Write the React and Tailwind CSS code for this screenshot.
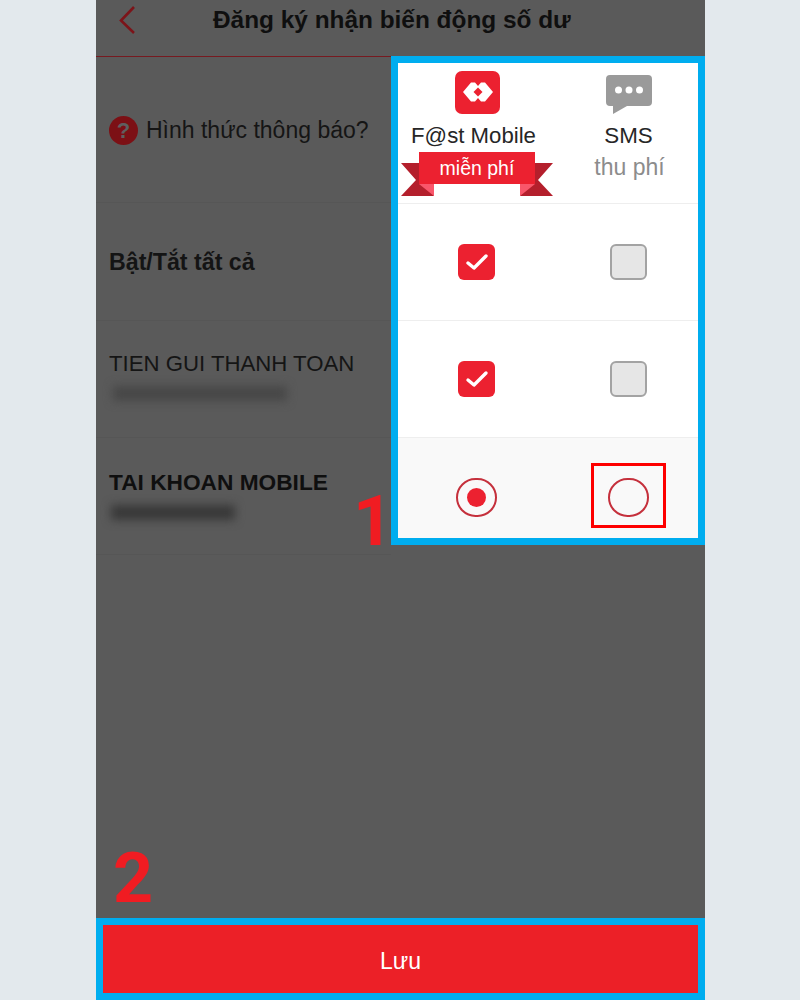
import React from 'react'

const Ribbon = () => (
    <div className="relative w-[152px] h-[47px] mt-[1px]">
        <svg width="152" height="47" viewBox="0 0 152 47" className="block">
            <polygon points="0,13 18,13 33,46 0,46 15,30" fill="#b41f2c" />
            <polygon points="152,13 134,13 119,46 152,46 137,30" fill="#b41f2c" />
            <polygon points="18,34 33,34 33,46" fill="#f9566a" />
            <polygon points="134,34 119,34 119,46" fill="#f9566a" />
            <rect x="18" y="2" width="116" height="32" fill="#ec2130" />
        </svg>
        <span className="absolute left-0 right-0 top-[6px] text-center text-[19.5px] leading-[24px] text-white">miễn phí</span>
    </div>
)

const FastLogo = () => (
    <svg width="45" height="43" viewBox="0 0 45 43" className="block">
        <rect width="45" height="43" rx="7" fill="#ec2130" />
        <polygon points="8,21 16,11.5 20,11.5 23,15 26,11.5 30,11.5 38,21 30,30.5 26,30.5 23,27 20,30.5 16,30.5" fill="#fff" />
        <polygon points="23,16.5 27.5,21 23,25.5 18.5,21" fill="#ec2130" />
    </svg>
)

const SmsIcon = () => (
    <svg width="46" height="40" viewBox="0 0 46 40" className="block">
        <path d="M4 0H42a4 4 0 0 1 4 4V27a4 4 0 0 1-4 4H21L7 39V31H4a4 4 0 0 1-4-4V4a4 4 0 0 1 4-4Z" fill="#9a9a9a" />
        <circle cx="12.5" cy="15" r="3.5" fill="#fff" />
        <circle cx="23" cy="15" r="3.5" fill="#fff" />
        <circle cx="33.5" cy="15" r="3.5" fill="#fff" />
    </svg>
)

const Checked = () => (
    <div className="w-[37px] h-[36px] rounded-[6px] bg-[#ec2130] flex items-center justify-center">
        <svg width="24" height="20" viewBox="0 0 24 20">
            <path d="M3 11l6 5L21 4" fill="none" stroke="#fff" strokeWidth="3.4" strokeLinecap="round" strokeLinejoin="round" />
        </svg>
    </div>
)

const Unchecked = () => (
    <div className="w-[37px] h-[36px] rounded-[6px] bg-[#e6e6e6] border-2 border-[#a3a3a3]"></div>
)

const Radio = ({ selected }) => (
    <div className="w-[41px] h-[39px] rounded-full border-2 border-[#c5303c] flex items-center justify-center">
        {selected && <div className="w-[19px] h-[19px] rounded-full bg-[#ec2130]"></div>}
    </div>
)

const PanelRow = ({ left, right, className }) => (
    <div className={`flex items-center ${className}`}>
        <div className="w-[157px] flex justify-center">{left}</div>
        <div className="w-[143px] pl-[3px] flex justify-center">{right}</div>
    </div>
)

const App = () => {
    return (
        <div className="relative w-[800px] h-[1000px] overflow-hidden bg-[#e3e9ed] pl-[96px] font-['Liberation_Sans',Arial,sans-serif]">
            <div className="relative w-[609px] h-[1000px] bg-[#5a5a5a] flex flex-col">
                <div className="h-[56px] flex items-start shrink-0">
                    <svg width="20" height="30" viewBox="0 0 20 30" className="ml-[21px] mt-[5px]">
                        <path d="M17 2L4 15.5 17 28" fill="none" stroke="#7c1419" strokeWidth="2.6" />
                    </svg>
                    <h1 className="ml-[76px] mt-[6px] text-[24.4px] leading-[28px] font-bold text-[#0f0f0f] whitespace-nowrap">Đăng ký nhận biến động số dư</h1>
                </div>

                <div className="flex h-[499px] shrink-0">
                    <div className="w-[295px] border-t border-[#771a20] flex flex-col">
                        <div className="h-[146px] border-b border-[#565656] flex items-center pl-[13px] pt-[2px] gap-[8px]">
                            <div className="w-[29px] h-[29px] rounded-full bg-[#7c1015] flex items-center justify-center text-[22px] font-bold leading-none text-[#5f5f5f]">?</div>
                            <span className="text-[23px] text-[#151515] whitespace-nowrap">Hình thức thông báo?</span>
                        </div>
                        <div className="h-[118px] border-b border-[#565656] flex items-center pl-[13px] pt-[2px]">
                            <span className="text-[23.2px] font-bold text-[#141414] whitespace-nowrap">Bật/Tắt tất cả</span>
                        </div>
                        <div className="h-[117px] border-b border-[#565656] pl-[13px] pt-[28px]">
                            <p className="text-[22.2px] leading-[30px] text-[#151515] whitespace-nowrap">TIEN GUI THANH TOAN</p>
                            <div className="mt-[7px] ml-[4px] w-[174px] h-[15px] bg-[#474747] blur-[5px]"></div>
                        </div>
                        <div className="h-[117px] border-b border-[#565656] pl-[13px] pt-[29px]">
                            <p className="text-[22.7px] leading-[30px] font-bold text-[#0f0f0f] whitespace-nowrap">TAI KHOAN MOBILE</p>
                            <div className="mt-[8px] ml-[2px] w-[124px] h-[15px] bg-[#383838] blur-[5px]"></div>
                        </div>
                    </div>

                    <div className="w-[314px] h-[489px] border-[7px] border-[#00adef] bg-white flex flex-col">
                        <div className="h-[141px] border-b border-[#eeeeee] flex pt-[8px]">
                            <div className="w-[158px] flex flex-col items-center">
                                <FastLogo />
                                <p className="mt-[9px] -ml-[7px] text-[22.2px] leading-[26px] text-[#262626] whitespace-nowrap">F@st Mobile</p>
                                <Ribbon />
                            </div>
                            <div className="w-[142px] pl-[5px] flex flex-col items-center">
                                <div className="mt-[4px] -ml-[2px]"><SmsIcon /></div>
                                <p className="mt-[8px] -ml-[2px] text-[22.4px] leading-[26px] text-[#262626]">SMS</p>
                                <p className="mt-[5px] text-[23px] leading-[26px] text-[#8c8c8c] whitespace-nowrap">thu phí</p>
                            </div>
                        </div>
                        <PanelRow className="h-[117px] border-b border-[#eeeeee]" left={<Checked />} right={<Unchecked />} />
                        <PanelRow className="h-[117px] border-b border-[#eeeeee]" left={<Checked />} right={<Unchecked />} />
                        <PanelRow
                            className="flex-1 bg-[#f9f9f9] pt-[18px]"
                            left={<Radio selected />}
                            right={
                                <div className="w-[75px] h-[65px] border-[3px] border-[#fe0000] flex items-center justify-center mb-[3px] pt-[3px]">
                                    <Radio />
                                </div>
                            }
                        />
                    </div>
                </div>

                <span className="absolute left-[257px] top-[481px] text-[70px] leading-[80px] font-bold text-[#f01c22] font-['Roboto',sans-serif]">1</span>
                <span className="absolute left-[17px] top-[838px] text-[70px] leading-[80px] font-bold text-[#f01c22] font-['Roboto',sans-serif]">2</span>

                <div className="mt-auto h-[82px] border-[7px] border-[#00adef] bg-[#ec2027] flex items-center justify-center pt-[5px]">
                    <span className="text-[23px] text-white">Lưu</span>
                </div>
            </div>
        </div>
    )
}

export default App
